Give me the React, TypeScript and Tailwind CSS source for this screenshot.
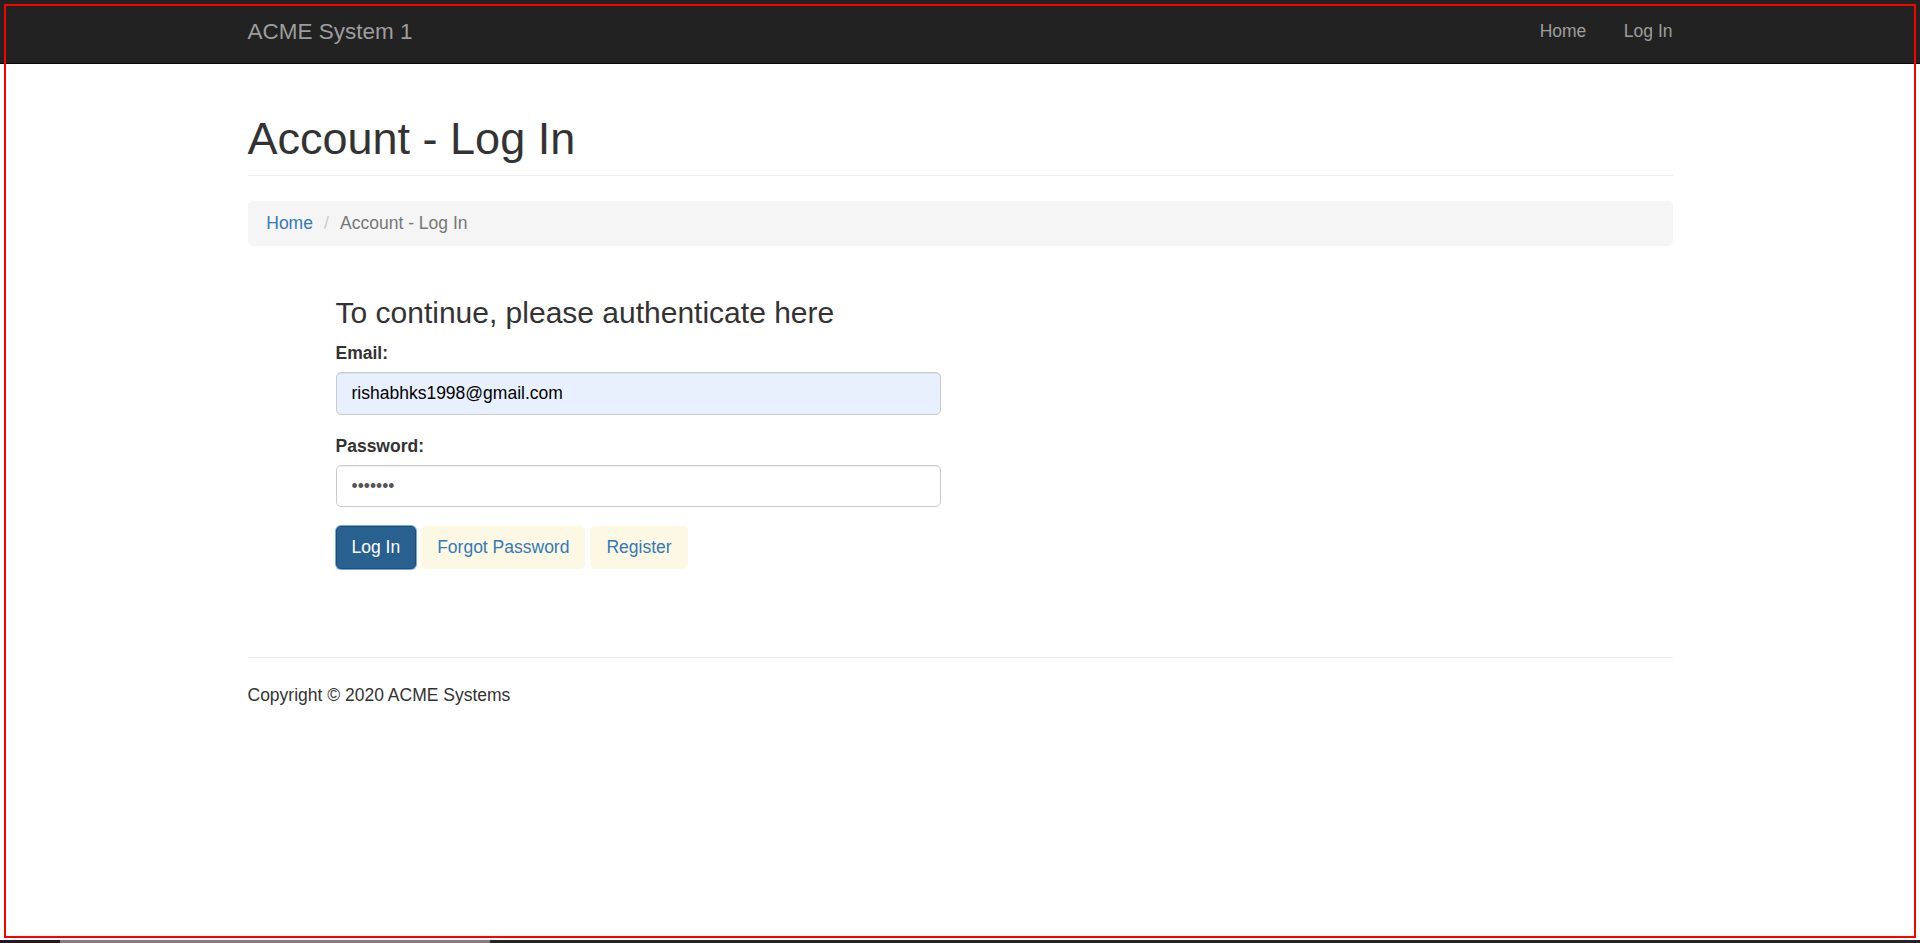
import React from 'react';

const NavLink: React.FC<{ label: string; last?: boolean }> = ({ label, last }) => (
  <a href="#" className={`px-[18.75px] leading-[25px] text-[#9d9d9d] ${last ? '-mr-[18.75px]' : ''}`}>
    {label}
  </a>
);

const App: React.FC = () => {
  return (
    <div className="relative flex h-[943px] w-full flex-col overflow-hidden bg-white font-['Liberation_Sans',Arial,sans-serif] text-[17.5px] leading-[25px] text-[#333]">
      <div className="flex-1">
        <nav className="h-[63.75px] border-b border-[#080808] bg-[#222]">
          <div className="mx-auto flex h-full w-[1425px] items-center justify-between">
            <a href="#" className="text-[22.5px] leading-[25px] text-[#9d9d9d]">ACME System 1</a>
            <div className="flex items-center">
              <NavLink label="Home" />
              <NavLink label="Log In" last />
            </div>
          </div>
        </nav>

        <div className="mx-auto w-[1425px]">
          <div className="mt-[50px] mb-[25px] border-b border-[#eee] pb-[11.25px]">
            <h1 className="text-[45px] font-normal leading-[1.1] text-[#333]">Account - Log In</h1>
          </div>

          <ol className="flex rounded-[5px] bg-[#f5f5f5] px-[18.75px] py-[10px]">
            <li><a href="#" className="text-[#337ab7]">Home</a></li>
            <li className="pl-[4.9px] text-[#777]">
              <span className="px-[6.25px] text-[#ccc]">/&nbsp;</span>
              Account - Log In
            </li>
          </ol>

          <div className="ml-[88px] w-[605px] pt-[50px]">
            <h3 className="mb-[12.5px] text-[30px] font-normal leading-[1.1]">To continue, please authenticate here</h3>

            <div className="mb-[18.75px]">
              <label className="mb-[6.25px] block font-bold">Email:</label>
              <input
                type="email"
                defaultValue="rishabhks1998@gmail.com"
                className="block h-[42.5px] w-full rounded-[5px] border border-[#ccc] bg-[#e8f0fe] px-[15px] py-[7.5px] text-[17.5px] text-black shadow-[inset_0_1px_1px_rgba(0,0,0,0.075)] outline-none"
              />
            </div>

            <div className="mb-[18.75px]">
              <label className="mb-[6.25px] block font-bold">Password:</label>
              <input
                type="password"
                defaultValue="1234567"
                className="block h-[42.5px] w-full rounded-[5px] border border-[#ccc] bg-white px-[15px] py-[7.5px] text-[17.5px] text-[#555] shadow-[inset_0_1px_1px_rgba(0,0,0,0.075)] outline-none"
              />
            </div>

            <div className="flex gap-[5px]">
              <button className="h-[42.5px] rounded-[5px] border border-[#204d74] bg-[#286090] px-[15px] text-white shadow-[0_0_0_1px_#77a8ea]">
                Log In
              </button>
              <a href="#" className="flex h-[42.5px] items-center rounded-[5px] border border-transparent bg-[#fcf8e3] px-[15px] text-[#337ab7]">
                Forgot Password
              </a>
              <a href="#" className="flex h-[42.5px] items-center rounded-[5px] border border-transparent bg-[#fcf8e3] px-[15px] text-[#337ab7]">
                Register
              </a>
            </div>
          </div>

          <hr className="mt-[88.5px] border-t border-[#eee]" />
          <footer className="mt-[25px]">
            <p>Copyright © 2020 ACME Systems</p>
          </footer>
        </div>
      </div>

      <div className="flex h-[3px] w-full">
        <div className="w-[60px] bg-[#2b1520]" />
        <div className="w-[430px] bg-[#8e7884]" />
        <div className="flex-1 bg-[#2b2026]" />
      </div>

      <div className="pointer-events-none absolute left-[4px] top-[4px] h-[934px] w-[1912px] border-2 border-[#ff0000]" />
    </div>
  );
};

export default App;
